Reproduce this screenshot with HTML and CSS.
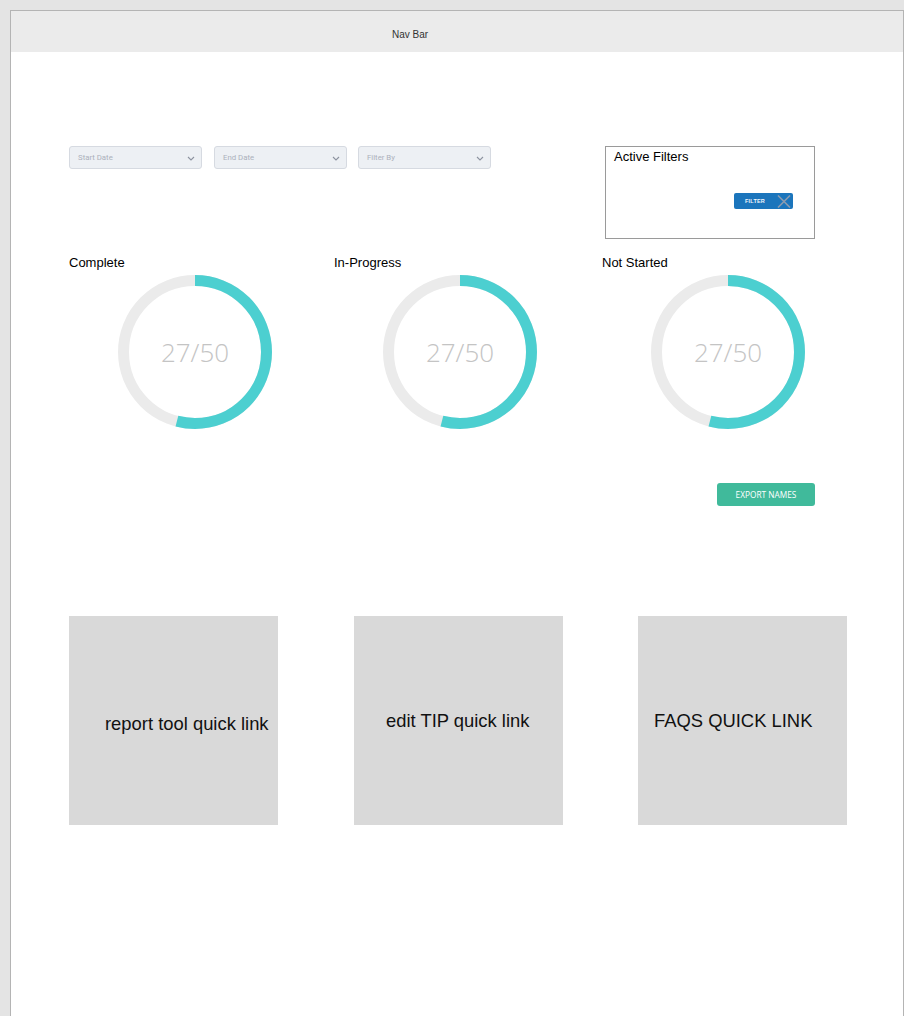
FILE: index.html
```html
<!DOCTYPE html>
<html>
<head>
<meta charset="utf-8">
<link rel="stylesheet" href="styles.css">
</head>
<body>
<div class="frame">
  <header class="navbar"><span class="nav-title">Nav Bar</span></header>
  <main class="content">
    <section class="filters-row">
      <div class="dropdowns">
        <div class="dropdown"><span>Start Date</span><svg class="chev" width="8" height="5" viewBox="0 0 8 5"><path d="M1 1l3 3 3-3" fill="none" stroke="#8d93a0" stroke-width="1.1"/></svg></div>
        <div class="dropdown d2"><span>End Date</span><svg class="chev" width="8" height="5" viewBox="0 0 8 5"><path d="M1 1l3 3 3-3" fill="none" stroke="#8d93a0" stroke-width="1.1"/></svg></div>
        <div class="dropdown d3"><span>Filter By</span><svg class="chev" width="8" height="5" viewBox="0 0 8 5"><path d="M1 1l3 3 3-3" fill="none" stroke="#8d93a0" stroke-width="1.1"/></svg></div>
      </div>
      <div class="active-filters">
        <div class="af-title">Active Filters</div>
        <div class="chip-row">
          <div class="chip"><span class="chip-label">FILTER</span><svg class="chip-x" width="14" height="13" viewBox="0 0 14 13"><path d="M1 0.5l12 12M13 0.5l-12 12" stroke="#8a9bb0" stroke-width="1.6"/></svg></div>
        </div>
      </div>
    </section>

    <section class="stats">
      <div class="stat">
        <div class="stat-label">Complete</div>
        <div class="donut">
          <svg width="154" height="154" viewBox="0 0 154 154"><circle cx="77" cy="77" r="71.5" fill="none" stroke="#ebebeb" stroke-width="11"/><circle cx="77" cy="77" r="71.5" fill="none" stroke="#4ccfd0" stroke-width="11" stroke-dasharray="242.6 449.25" transform="rotate(-90 77 77)"/></svg>
          <span class="donut-value">27/50</span>
        </div>
      </div>
      <div class="stat s2">
        <div class="stat-label">In-Progress</div>
        <div class="donut">
          <svg width="154" height="154" viewBox="0 0 154 154"><circle cx="77" cy="77" r="71.5" fill="none" stroke="#ebebeb" stroke-width="11"/><circle cx="77" cy="77" r="71.5" fill="none" stroke="#4ccfd0" stroke-width="11" stroke-dasharray="242.6 449.25" transform="rotate(-90 77 77)"/></svg>
          <span class="donut-value">27/50</span>
        </div>
      </div>
      <div class="stat s3">
        <div class="stat-label">Not Started</div>
        <div class="donut">
          <svg width="154" height="154" viewBox="0 0 154 154"><circle cx="77" cy="77" r="71.5" fill="none" stroke="#ebebeb" stroke-width="11"/><circle cx="77" cy="77" r="71.5" fill="none" stroke="#4ccfd0" stroke-width="11" stroke-dasharray="242.6 449.25" transform="rotate(-90 77 77)"/></svg>
          <span class="donut-value">27/50</span>
        </div>
      </div>
    </section>

    <div class="export-row"><button class="export-btn">EXPORT NAMES</button></div>

    <section class="quick-links">
      <a class="quick-link ql1">report tool quick link</a>
      <a class="quick-link ql2">edit TIP quick link</a>
      <a class="quick-link ql3">FAQS QUICK LINK</a>
    </section>
  </main>
</div>
</body>
</html>
```
FILE: styles.css
```css
html, body {
  margin: 0;
  padding: 0;
}
body {
  background: #e4e4e4;
  font-family: "Liberation Sans", Arial, sans-serif;
  height: 1016px;
  overflow: hidden;
}
.frame {
  margin: 10px 0 0 10px;
  width: 892px;
  height: 1005px;
  background: #fff;
  border-top: 1px solid #b4b4b4;
  border-left: 1px solid #b4b4b4;
  border-right: 1px solid #b4b4b4;
}
.navbar {
  height: 41px;
  background: #ebebeb;
  display: flex;
  align-items: center;
  padding-left: 381px;
}
.nav-title {
  font-size: 10px;
  color: #333;
  padding-top: 5px;
}
.content {
  padding: 0 88px 0 58px;
}
.filters-row {
  display: flex;
  align-items: flex-start;
  margin-top: 94px;
}
.dropdowns {
  display: flex;
}
.dropdown {
  width: 133px;
  height: 23px;
  box-sizing: border-box;
  background: #edf0f4;
  border: 1px solid #d6dae1;
  border-radius: 3px;
  display: flex;
  align-items: center;
  justify-content: space-between;
  padding: 0 6px 0 8px;
  font-family: Roboto, "Liberation Sans", sans-serif;
  font-size: 7.8px;
  color: #acb1bc;
}
.dropdown.d2 { margin-left: 12px; }
.dropdown.d3 { margin-left: 11px; }
.chev { margin-top: 1px; }
.active-filters {
  margin-left: auto;
  width: 210px;
  height: 93px;
  box-sizing: border-box;
  border: 1.5px solid #9a9a9a;
  padding: 2px 8px 0 8px;
}
.af-title {
  font-size: 13px;
  line-height: 15px;
  color: #000;
}
.chip-row {
  display: flex;
  justify-content: flex-end;
  padding-right: 13px;
  margin-top: 29px;
}
.chip {
  width: 59px;
  height: 16px;
  box-sizing: border-box;
  background: #1b75bc;
  border-radius: 2px;
  display: flex;
  align-items: center;
  padding-left: 11px;
}
.chip-label {
  font-size: 5.5px;
  font-weight: bold;
  color: #eef4fb;
  letter-spacing: 0.2px;
}
.chip-x {
  margin-left: 12px;
}
.stats {
  display: grid;
  grid-template-columns: 265px 268px 1fr;
  margin-top: 16px;
}
.stat-label {
  font-size: 13px;
  line-height: 15px;
  color: #000;
}
.donut {
  position: relative;
  width: 154px;
  height: 154px;
  margin: 5px 0 0 49px;
}
.donut svg { display: block; }
.donut-value {
  position: absolute;
  inset: 0;
  display: flex;
  align-items: center;
  justify-content: center;
  font-family: "Open Sans", sans-serif;
  font-weight: 300;
  font-size: 26px;
  color: #c4c4c4;
}
.export-row {
  display: flex;
  justify-content: flex-end;
  margin-top: 54px;
}
.export-btn {
  width: 98px;
  height: 23px;
  border: none;
  border-radius: 3px;
  background: #40ba9b;
  color: #fff;
  font-family: "Open Sans", sans-serif;
  font-size: 8.3px;
  padding: 0;
}
.quick-links {
  display: flex;
  margin-top: 110px;
  margin-right: -32px;
}
.quick-link {
  width: 209px;
  height: 209px;
  box-sizing: border-box;
  background: #d9d9d9;
  display: flex;
  align-items: center;
  font-size: 18.4px;
  color: #111;
  text-decoration: none;
}
.ql1 { padding: 7px 0 0 36px; }
.ql2 { margin-left: 76px; padding: 0 0 0 32px; }
.ql3 { margin-left: 75px; padding: 0 0 0 16px; }
```
